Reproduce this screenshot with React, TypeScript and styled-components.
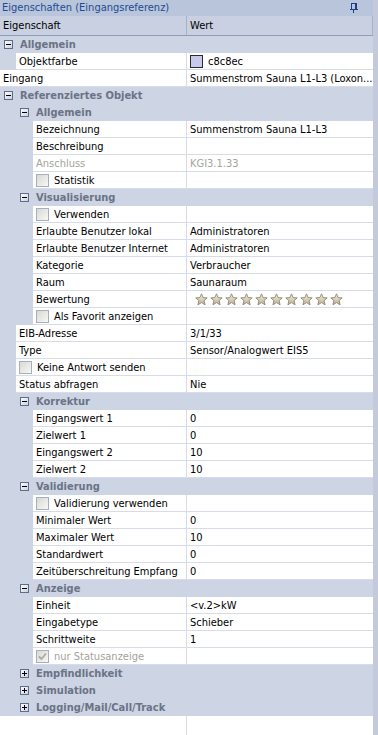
import React from "react";
import styled, { createGlobalStyle } from "styled-components";

const GlobalStyle = createGlobalStyle`
  html, body {
    margin: 0;
    padding: 0;
    background: #ffffff;
  }
  body {
    font-family: "DejaVu Sans Condensed", "DejaVu Sans", "Liberation Sans", sans-serif;
    font-stretch: condensed;
    font-size: 11px;
  }
`;

const BG = "#cdd4e3";
const LINE = "#d8dce7";
const INDENT = [0, 16, 33];

type Row =
  | { t: "cat"; lvl: number; label: string; open: boolean }
  | {
      t: "prop";
      lvl: number;
      label: string;
      value?: string;
      disabled?: boolean;
      check?: "off" | "on";
      swatch?: string;
      stars?: number;
    };

const rows: Row[] = [
  { t: "cat", lvl: 0, label: "Allgemein", open: true },
  { t: "prop", lvl: 1, label: "Objektfarbe", value: "c8c8ec", swatch: "#c8c8ec" },
  { t: "prop", lvl: 0, label: "Eingang", value: "Summenstrom Sauna L1-L3 (Loxon..." },
  { t: "cat", lvl: 0, label: "Referenziertes Objekt", open: true },
  { t: "cat", lvl: 1, label: "Allgemein", open: true },
  { t: "prop", lvl: 2, label: "Bezeichnung", value: "Summenstrom Sauna L1-L3" },
  { t: "prop", lvl: 2, label: "Beschreibung" },
  { t: "prop", lvl: 2, label: "Anschluss", value: "KGI3.1.33", disabled: true },
  { t: "prop", lvl: 2, label: "Statistik", check: "off" },
  { t: "cat", lvl: 1, label: "Visualisierung", open: true },
  { t: "prop", lvl: 2, label: "Verwenden", check: "off" },
  { t: "prop", lvl: 2, label: "Erlaubte Benutzer lokal", value: "Administratoren" },
  { t: "prop", lvl: 2, label: "Erlaubte Benutzer Internet", value: "Administratoren" },
  { t: "prop", lvl: 2, label: "Kategorie", value: "Verbraucher" },
  { t: "prop", lvl: 2, label: "Raum", value: "Saunaraum" },
  { t: "prop", lvl: 2, label: "Bewertung", stars: 10 },
  { t: "prop", lvl: 2, label: "Als Favorit anzeigen", check: "off" },
  { t: "prop", lvl: 1, label: "EIB-Adresse", value: "3/1/33" },
  { t: "prop", lvl: 1, label: "Type", value: "Sensor/Analogwert EIS5" },
  { t: "prop", lvl: 1, label: "Keine Antwort senden", check: "off" },
  { t: "prop", lvl: 1, label: "Status abfragen", value: "Nie" },
  { t: "cat", lvl: 1, label: "Korrektur", open: true },
  { t: "prop", lvl: 2, label: "Eingangswert 1", value: "0" },
  { t: "prop", lvl: 2, label: "Zielwert 1", value: "0" },
  { t: "prop", lvl: 2, label: "Eingangswert 2", value: "10" },
  { t: "prop", lvl: 2, label: "Zielwert 2", value: "10" },
  { t: "cat", lvl: 1, label: "Validierung", open: true },
  { t: "prop", lvl: 2, label: "Validierung verwenden", check: "off" },
  { t: "prop", lvl: 2, label: "Minimaler Wert", value: "0" },
  { t: "prop", lvl: 2, label: "Maximaler Wert", value: "10" },
  { t: "prop", lvl: 2, label: "Standardwert", value: "0" },
  { t: "prop", lvl: 2, label: "Zeitüberschreitung Empfang", value: "0" },
  { t: "cat", lvl: 1, label: "Anzeige", open: true },
  { t: "prop", lvl: 2, label: "Einheit", value: "<v.2>kW" },
  { t: "prop", lvl: 2, label: "Eingabetype", value: "Schieber" },
  { t: "prop", lvl: 2, label: "Schrittweite", value: "1" },
  { t: "prop", lvl: 2, label: "nur Statusanzeige", check: "on", disabled: true },
  { t: "cat", lvl: 1, label: "Empfindlichkeit", open: false },
  { t: "cat", lvl: 1, label: "Simulation", open: false },
  { t: "cat", lvl: 1, label: "Logging/Mail/Call/Track", open: false },
];

const Frame = styled.div`
  display: flex;
  width: 378px;
  height: 735px;
  overflow: hidden;
`;

const Panel = styled.div`
  flex: 1;
  display: flex;
  flex-direction: column;
  background: #ffffff;
`;

const Splitter = styled.div`
  width: 6px;
  background: #c4c9dc;
`;

const TitleBar = styled.div`
  height: 16px;
  display: flex;
  align-items: center;
  justify-content: space-between;
  padding: 0 15px 0 2px;
  background: #b9c5da;
  color: #1e4a96;
  line-height: 16px;
`;

const Header = styled.div`
  height: 19px;
  display: flex;
  background: #c8d0e1;
  border-bottom: 1px solid #8f9cba;
  line-height: 19px;
`;

const HeaderCell = styled.div<{ $w?: number }>`
  ${(p) => (p.$w ? `width: ${p.$w}px;` : "flex: 1;")}
  padding-left: 3px;
  color: #000;
  border-right: 1px solid #a7b1c8;
  box-sizing: border-box;
`;

const Body = styled.div`
  flex: 1;
  display: flex;
  flex-direction: column;
`;

const CatRow = styled.div<{ $lvl: number }>`
  height: 17px;
  display: flex;
  align-items: center;
  gap: 7px;
  padding-left: ${(p) => 4 + p.$lvl * 16}px;
  background: ${BG};
  color: #6b7386;
  font-weight: bold;
`;

const PropRow = styled.div`
  height: 17px;
  display: flex;
  background: ${BG};
`;

const Indent = styled.div<{ $w: number }>`
  width: ${(p) => p.$w}px;
  flex: none;
`;

const LabelCell = styled.div<{ $w: number; $dis?: boolean }>`
  width: ${(p) => p.$w}px;
  flex: none;
  box-sizing: border-box;
  display: flex;
  align-items: center;
  gap: 5px;
  padding-left: 3px;
  background: #fff;
  border-right: 1px solid ${LINE};
  border-bottom: 1px solid ${LINE};
  color: ${(p) => (p.$dis ? "#a3a39b" : "#000")};
  white-space: nowrap;
  overflow: hidden;
`;

const ValueCell = styled.div<{ $dis?: boolean }>`
  flex: 1;
  display: flex;
  align-items: center;
  gap: 5px;
  padding-left: 3px;
  background: #fff;
  border-bottom: 1px solid ${LINE};
  color: ${(p) => (p.$dis ? "#a3a39b" : "#000")};
  white-space: nowrap;
  overflow: hidden;
`;

const Swatch = styled.span<{ $c: string }>`
  width: 11px;
  height: 11px;
  border: 1px solid #2b2b2b;
  background: ${(p) => p.$c};
  flex: none;
`;

const Check = styled.span`
  width: 11px;
  height: 11px;
  border: 1px solid #a6afc2;
  background: linear-gradient(135deg, #d9d9d3, #f7f7f5);
  flex: none;
  display: flex;
  align-items: center;
  justify-content: center;
`;

const Stars = styled.div`
  display: flex;
  gap: 2px;
  padding-left: 5px;
`;

const Filler = styled.div`
  flex: 1;
  display: flex;
`;

const FillerLeft = styled.div`
  width: 186px;
  border-right: 1px solid ${LINE};
`;

const Expander = ({ open }: { open: boolean }) => (
  <svg width="9" height="9" viewBox="0 0 9 9">
    <defs>
      <linearGradient id="eg" x1="0" y1="0" x2="1" y2="1">
        <stop offset="0" stopColor="#ffffff" />
        <stop offset="1" stopColor="#c9cfdc" />
      </linearGradient>
    </defs>
    <rect x="0.5" y="0.5" width="8" height="8" fill="url(#eg)" stroke="#5d6d8c" />
    <rect x="2" y="4" width="5" height="1" fill="#000" />
    {!open && <rect x="4" y="2" width="1" height="5" fill="#000" />}
  </svg>
);

const Star = () => (
  <svg width="13" height="13" viewBox="0 0 13 13">
    <defs>
      <linearGradient id="sg" x1="0" y1="0" x2="0" y2="1">
        <stop offset="0" stopColor="#f4f1e6" />
        <stop offset="1" stopColor="#b8af94" />
      </linearGradient>
    </defs>
    <polygon
      points="6.5,0.8 8.1,4.6 12.2,4.9 9.1,7.6 10.1,11.8 6.5,9.6 2.9,11.8 3.9,7.6 0.8,4.9 4.9,4.6"
      fill="url(#sg)"
      stroke="#8e8770"
      strokeWidth="0.9"
      strokeLinejoin="round"
    />
  </svg>
);

const Pin = () => (
  <svg width="8" height="10" viewBox="0 0 8 10">
    <rect x="1.5" y="0.5" width="4" height="6" fill="none" stroke="#1e3f86" />
    <rect x="5" y="0" width="2" height="7" fill="#1e3f86" />
    <rect x="0" y="6" width="8" height="1" fill="#1e3f86" />
    <rect x="3" y="7" width="1" height="3" fill="#1e3f86" />
  </svg>
);

const Tick = () => (
  <svg width="9" height="9" viewBox="0 0 9 9">
    <path d="M1 4.5 L3.5 7 L8 1.5" fill="none" stroke="#a9a9a1" strokeWidth="1.8" />
  </svg>
);

export default function App() {
  return (
    <>
      <GlobalStyle />
      <Frame>
        <Panel>
          <TitleBar>
            <span>Eigenschaften (Eingangsreferenz)</span>
            <Pin />
          </TitleBar>
          <Header>
            <HeaderCell $w={187}>Eigenschaft</HeaderCell>
            <HeaderCell>Wert</HeaderCell>
          </Header>
          <Body>
            {rows.map((r, i) => {
              if (r.t === "cat") {
                return (
                  <CatRow key={i} $lvl={r.lvl}>
                    <Expander open={r.open} />
                    <span>{r.label}</span>
                  </CatRow>
                );
              }
              const ind = INDENT[r.lvl];
              return (
                <PropRow key={i}>
                  <Indent $w={ind} />
                  <LabelCell $w={187 - ind} $dis={r.disabled}>
                    {r.check && <Check>{r.check === "on" && <Tick />}</Check>}
                    <span>{r.label}</span>
                  </LabelCell>
                  <ValueCell $dis={r.disabled}>
                    {r.swatch && <Swatch $c={r.swatch} />}
                    {r.stars ? (
                      <Stars>
                        {Array.from({ length: r.stars }).map((_, k) => (
                          <Star key={k} />
                        ))}
                      </Stars>
                    ) : (
                      <span>{r.value}</span>
                    )}
                  </ValueCell>
                </PropRow>
              );
            })}
            <Filler>
              <FillerLeft />
            </Filler>
          </Body>
        </Panel>
        <Splitter />
      </Frame>
    </>
  );
}
